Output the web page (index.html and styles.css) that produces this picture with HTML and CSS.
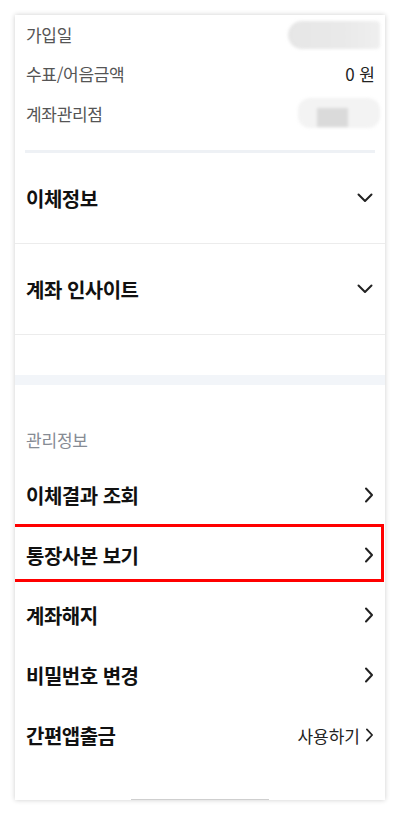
FILE: index.html
```html
<!DOCTYPE html>
<html lang="ko">
<head>
<meta charset="utf-8">
<link rel="stylesheet" href="styles.css">
</head>
<body>
<div class="card">
  <div class="info">
    <div class="info-row r1"><span class="label">가입일</span><span class="blob blob1"></span></div>
    <div class="info-row"><span class="label">수표/어음금액</span><span class="value">0 원</span></div>
    <div class="info-row"><span class="label">계좌관리점</span><span class="blob blob2"><span class="blob2-in"></span></span></div>
  </div>
  <div class="thin-bar"></div>
  <div class="acc">
    <span class="title">이체정보</span>
    <svg class="down" width="16" height="10" viewBox="0 0 16 10"><path d="M1.5 1.5 L8 8 L14.5 1.5" fill="none" stroke="#222" stroke-width="2" stroke-linecap="round" stroke-linejoin="round"/></svg>
  </div>
  <div class="acc">
    <span class="title">계좌 인사이트</span>
    <svg class="down" width="16" height="10" viewBox="0 0 16 10"><path d="M1.5 1.5 L8 8 L14.5 1.5" fill="none" stroke="#222" stroke-width="2" stroke-linecap="round" stroke-linejoin="round"/></svg>
  </div>
  <div class="spacer"></div>
  <div class="band"></div>
  <div class="sec-head">관리정보</div>
  <div class="item"><span class="title">이체결과 조회</span>
    <svg class="right" width="10" height="16" viewBox="0 0 10 16"><path d="M2 1.5 L8 8 L2 14.5" fill="none" stroke="#222" stroke-width="2" stroke-linecap="round" stroke-linejoin="round"/></svg></div>
  <div class="item marked"><span class="title">통장사본 보기</span>
    <svg class="right" width="10" height="16" viewBox="0 0 10 16"><path d="M2 1.5 L8 8 L2 14.5" fill="none" stroke="#222" stroke-width="2" stroke-linecap="round" stroke-linejoin="round"/></svg></div>
  <div class="item"><span class="title">계좌해지</span>
    <svg class="right" width="10" height="16" viewBox="0 0 10 16"><path d="M2 1.5 L8 8 L2 14.5" fill="none" stroke="#222" stroke-width="2" stroke-linecap="round" stroke-linejoin="round"/></svg></div>
  <div class="item"><span class="title">비밀번호 변경</span>
    <svg class="right" width="10" height="16" viewBox="0 0 10 16"><path d="M2 1.5 L8 8 L2 14.5" fill="none" stroke="#222" stroke-width="2" stroke-linecap="round" stroke-linejoin="round"/></svg></div>
  <div class="item"><span class="title">간편앱출금</span>
    <span class="action">사용하기
    <svg class="right small" width="9" height="14" viewBox="0 0 10 16"><path d="M2 1.5 L8 8 L2 14.5" fill="none" stroke="#222" stroke-width="2" stroke-linecap="round" stroke-linejoin="round"/></svg></span></div>
  <div class="bottom-line"></div>
</div>
</body>
</html>
```
FILE: styles.css
```css
* { box-sizing: border-box; }
html, body { margin: 0; padding: 0; background: #fff; }
body {
  font-family: "Noto Sans CJK KR", "Noto Sans", sans-serif;
  color: #111;
  width: 400px;
  height: 815px;
  overflow: hidden;
}
.card {
  margin: 15px 15px 0;
  width: 370px;
  height: 785px;
  background: #fff;
  box-shadow: 0 0 5px rgba(0, 0, 0, 0.2);
  overflow: hidden;
  display: flex;
  flex-direction: column;
}
.info { padding: 0 10px 0 11px; }
.info-row {
  height: 40px;
  display: flex;
  align-items: center;
  justify-content: space-between;
  font-size: 17px;
}
.info-row.r1 { height: 38px; }
.label { color: #555; letter-spacing: -0.3px; }
.value { color: #222; font-size: 17px; }
.blob {
  display: block;
  margin-right: -5px;
  filter: blur(1.5px);
}
.blob1 {
  width: 92px;
  height: 28px;
  border-radius: 14px 4px 4px 14px;
  background: linear-gradient(90deg, #e6e6e6 0%, #e9e9e9 60%, #efefef 100%);
  margin-top: 2px;
}
.blob2 {
  width: 82px;
  height: 30px;
  border-radius: 12px;
  background: #f3f3f3;
  display: flex;
  align-items: flex-end;
  padding-left: 19px;
  padding-bottom: 1px;
}
.blob2-in {
  width: 31px;
  height: 19px;
  background: #dadada;
}
.thin-bar {
  margin: 17px 10px 0;
  height: 3px;
  background: #eef1f5;
}
.acc {
  height: 91px;
  border-bottom: 1px solid #ececec;
  display: flex;
  align-items: center;
  justify-content: space-between;
  padding: 0 12px 0 11px;
}
.title {
  font-size: 20px;
  font-weight: 700;
  letter-spacing: -0.5px;
  color: #111;
}
.spacer { height: 40px; }
.band { height: 10px; background: #f2f5f9; }
.sec-head {
  height: 80px;
  padding: 43px 11px 0;
  font-size: 17px;
  line-height: 24px;
  color: #868b94;
  letter-spacing: -0.2px;
}
.item {
  height: 60px;
  display: flex;
  align-items: center;
  justify-content: space-between;
  padding: 0 11px 0 11px;
  position: relative;
}
.marked::after {
  content: "";
  position: absolute;
  top: -1px;
  bottom: 3px;
  left: -4px;
  right: 1px;
  border: 3px solid #ff0000;
  pointer-events: none;
}
.down { display: block; }
.right { display: block; }
.action {
  display: flex;
  align-items: center;
  gap: 5px;
  font-size: 17px;
  color: #222;
}
.bottom-line {
  margin: auto 0 0 116px;
  width: 138px;
  height: 1px;
  background: #cfcfcf;
}
```
